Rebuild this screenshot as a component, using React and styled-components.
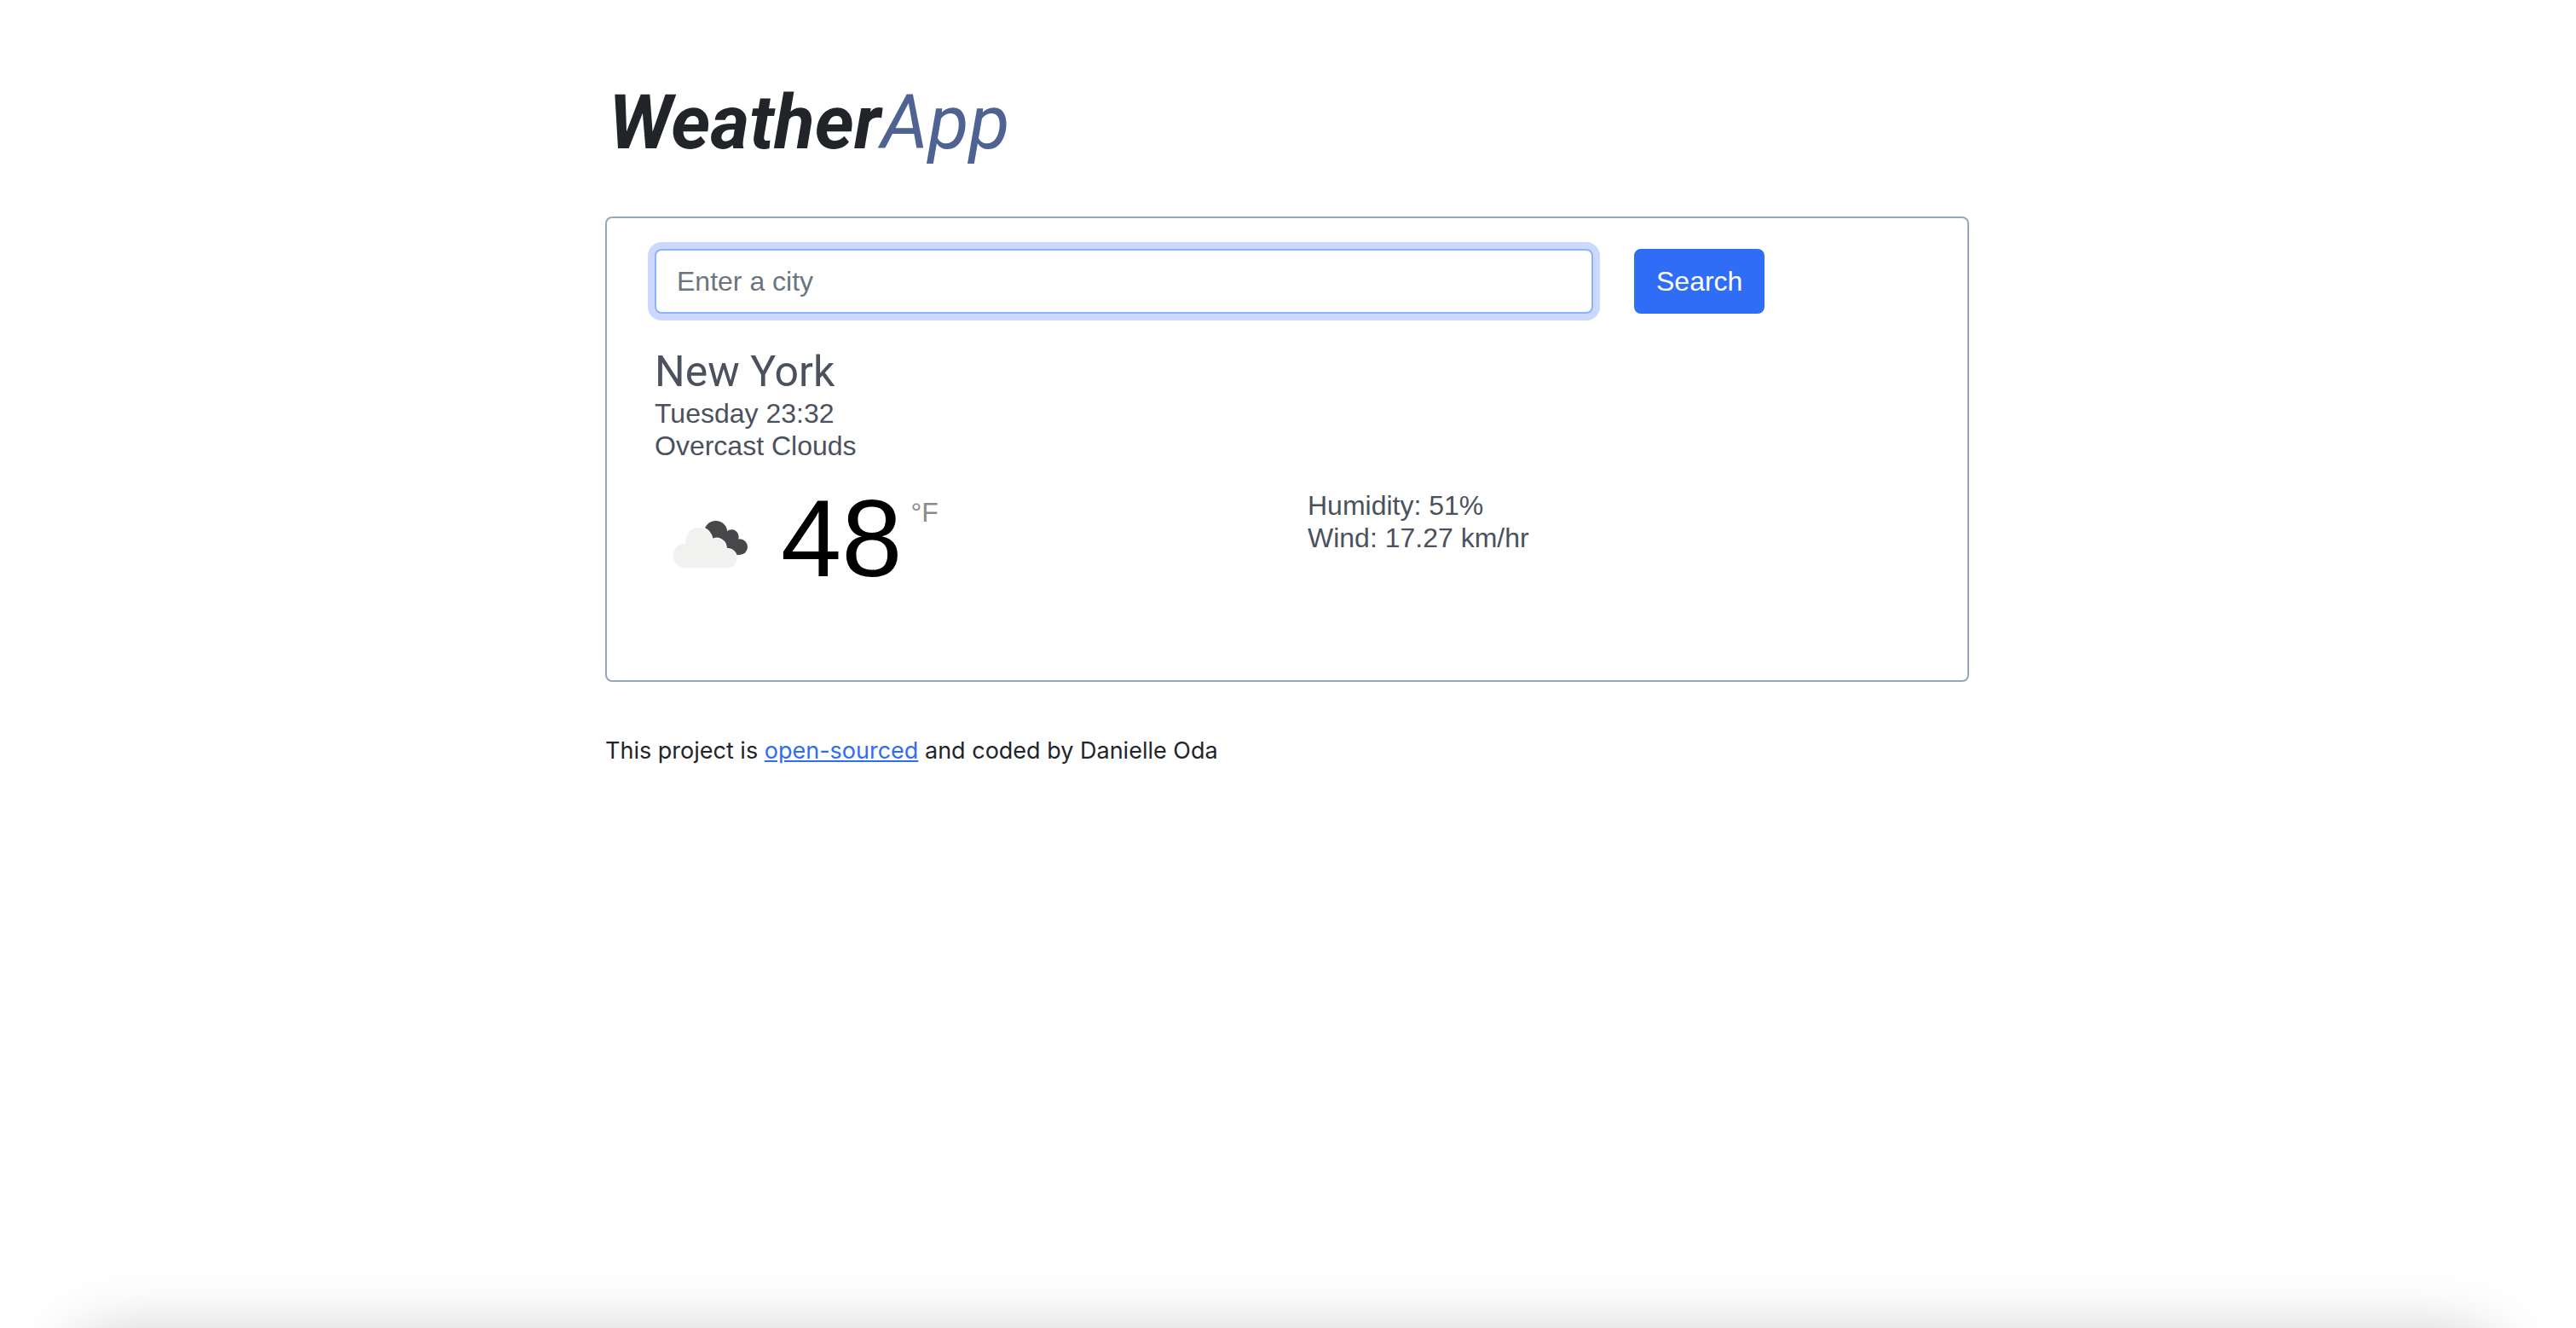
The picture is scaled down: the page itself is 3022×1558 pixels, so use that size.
import React, { useState } from "react";
import styled, { createGlobalStyle } from "styled-components";

const GlobalStyle = createGlobalStyle`
  *, *::before, *::after { box-sizing: border-box; }
  body {
    margin: 0;
    background: #fff;
    color: #212529;
    font-family: Inter, "Liberation Sans", sans-serif;
  }
`;

const Page = styled.div`
  min-height: 100vh;
  overflow: hidden;
  padding: 94px 26px 0 24px;
`;

const BottomShade = styled.div`
  position: fixed;
  top: calc(100% + 14px);
  left: 88px;
  right: 96px;
  height: 200px;
  border-radius: 40px;
  box-shadow: 0 0 80px rgba(0, 0, 0, 0.25);
  pointer-events: none;
`;

const Container = styled.main`
  width: 100%;
  max-width: 1600px;
  margin: 0 auto;
`;

const Title = styled.h1`
  margin: 0 0 60px;
  padding-left: 4px;
  font: italic 700 88px/100px Roboto, sans-serif;
`;

const TitleAccent = styled.span`
  font-weight: 400;
  color: #4f6393;
`;

const Card = styled.section`
  padding: 36px 56px 108px;
  border: 2px solid #9aa6c0;
  border-radius: 8px;
  color: #4b515d;
  font: 300 32px/38px "Liberation Sans", Arial, sans-serif;
`;

const Row = styled.div`
  display: grid;
  grid-template-columns: ${(p) => p.$columns};
  column-gap: 48px;
  align-items: start;
  margin-bottom: ${(p) => p.$gap || 0}px;
`;

const SearchForm = styled(Row).attrs({ as: "form" })`
  justify-items: start;
`;

const CityInput = styled.input`
  width: 100%;
  height: 76px;
  padding: 12px 24px;
  border: 2px solid #8bb3fb;
  border-radius: 8px;
  outline: none;
  box-shadow: 0 0 0 8px #cad9fd;
  background: #fff;
  color: #212529;
  font: 400 32px/48px "Liberation Sans", Arial, sans-serif;

  &::placeholder { color: #6c757d; opacity: 1; }
`;

const SearchButton = styled.button`
  height: 76px;
  padding: 12px 24px;
  border: 2px solid #306df6;
  border-radius: 8px;
  background: #306df6;
  color: #fff;
  font: 400 32px/48px "Liberation Sans", Arial, sans-serif;
  cursor: pointer;
`;

const City = styled.h2`
  margin: 0;
  font: 400 50px/60px Roboto, sans-serif;
`;

const Details = styled.ul`
  margin: 0 0 ${(p) => p.$gap || 0}px;
  padding: 0;
  list-style: none;
`;

const Current = styled.div`
  display: flex;
  align-items: center;
`;

const Temperature = styled.span`
  margin-left: 18px;
  color: #000;
  font-size: 128px;
  line-height: 116px;
`;

const Unit = styled.span`
  align-self: flex-start;
  margin: 8px 0 0 10px;
  color: #8c8c8c;
`;

const Footer = styled.footer`
  margin-top: 60px;
  font-size: 27px;
  line-height: 42px;
`;

const FooterLink = styled.a`
  color: #306df6;
`;

function CloudsIcon() {
  return (
    <svg width="130" height="104" viewBox="-6 -30 390 312" role="img" aria-label="Overcast clouds">
      <g fill="#48484a">
        <circle cx="209" cy="104" r="41" />
        <circle cx="265" cy="119" r="25" />
        <circle cx="293" cy="155" r="28" />
        <path d="M180 110 L225 75 L250 108 L285 130 L290 183 L240 190 Z" />
      </g>
      <path
        d="M97 228 A42 42 0 0 1 104 144 C100 112 121 86 150 86 C174 86 192 103 197 129 C218 117 246 132 246 162 C267 160 283 176 283 196 C283 215 270 228 252 228 Z"
        fill="#f1f1f0"
        stroke="#fff"
        strokeWidth="6"
        paintOrder="stroke"
      />
    </svg>
  );
}

export default function App() {
  const [city, setCity] = useState("");

  return (
    <>
      <GlobalStyle />
      <Page>
        <Container>
          <Title>
            Weather<TitleAccent>App</TitleAccent>
          </Title>
          <Card>
            <SearchForm
              $columns="minmax(0, 1101fr) minmax(0, 335fr)"
              $gap={38}
              onSubmit={(event) => event.preventDefault()}
            >
              <CityInput
                type="search"
                aria-label="City"
                placeholder="Enter a city"
                value={city}
                onChange={(event) => setCity(event.target.value)}
              />
              <SearchButton type="submit">Search</SearchButton>
            </SearchForm>
            <City>New York</City>
            <Details $gap={32}>
              <li>Tuesday 23:32</li>
              <li>Overcast Clouds</li>
            </Details>
            <Row $columns="1fr 1fr">
              <Current>
                <CloudsIcon />
                <Temperature>48</Temperature>
                <Unit>°F</Unit>
              </Current>
              <Details>
                <li>Humidity: 51%</li>
                <li>Wind: 17.27 km/hr</li>
              </Details>
            </Row>
          </Card>
          <Footer>
            This project is <FooterLink href="#source">open-sourced</FooterLink> and coded by Danielle Oda
          </Footer>
        </Container>
        <BottomShade />
      </Page>
    </>
  );
}
